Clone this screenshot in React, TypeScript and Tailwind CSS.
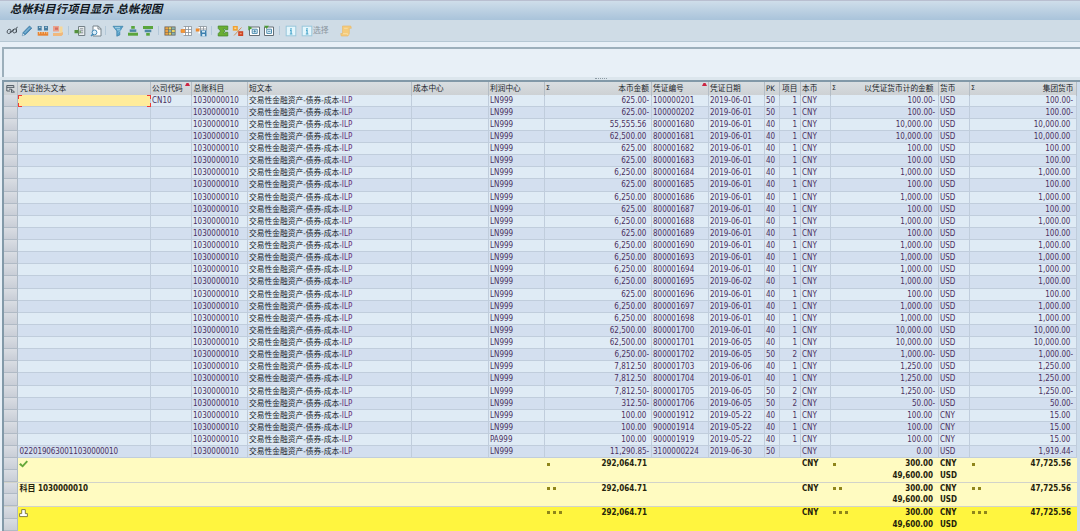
import { ReactNode } from "react";

type Line = {
  text?: string;
  company?: string;
  center: string;
  amount: string;
  doc: string;
  date: string;
  pk: string;
  item: string;
  docAmount: string;
  currency: string;
  groupAmount: string;
};

const line = (
  doc: string,
  amount: string,
  date: string,
  pk: string,
  item: string,
  docAmount: string,
  currency = "USD",
  groupAmount = docAmount,
  center = "LN999",
): Line => ({ doc, amount, date: `2019-${date}`, pk, item, docAmount, currency, groupAmount, center });

const lines: Line[] = [
  { ...line("100000201", "625.00-", "06-01", "50", "1", "100.00-"), company: "CN10" },
  line("100000202", "625.00-", "06-01", "50", "1", "100.00-"),
  line("800001680", "55,555.56", "06-01", "40", "1", "10,000.00"),
  line("800001681", "62,500.00", "06-01", "40", "1", "10,000.00"),
  line("800001682", "625.00", "06-01", "40", "1", "100.00"),
  line("800001683", "625.00", "06-01", "40", "1", "100.00"),
  line("800001684", "6,250.00", "06-01", "40", "1", "1,000.00"),
  line("800001685", "625.00", "06-01", "40", "1", "100.00"),
  line("800001686", "6,250.00", "06-01", "40", "1", "1,000.00"),
  line("800001687", "625.00", "06-01", "40", "1", "100.00"),
  line("800001688", "6,250.00", "06-01", "40", "1", "1,000.00"),
  line("800001689", "625.00", "06-01", "40", "1", "100.00"),
  line("800001690", "6,250.00", "06-01", "40", "1", "1,000.00"),
  line("800001693", "6,250.00", "06-01", "40", "1", "1,000.00"),
  line("800001694", "6,250.00", "06-01", "40", "1", "1,000.00"),
  line("800001695", "6,250.00", "06-02", "40", "1", "1,000.00"),
  line("800001696", "625.00", "06-01", "40", "1", "100.00"),
  line("800001697", "6,250.00", "06-01", "40", "1", "1,000.00"),
  line("800001698", "6,250.00", "06-01", "40", "1", "1,000.00"),
  line("800001700", "62,500.00", "06-01", "40", "1", "10,000.00"),
  line("800001701", "62,500.00", "06-05", "40", "1", "10,000.00"),
  line("800001702", "6,250.00-", "06-05", "50", "2", "1,000.00-"),
  line("800001703", "7,812.50", "06-06", "40", "1", "1,250.00"),
  line("800001704", "7,812.50", "06-01", "40", "1", "1,250.00"),
  line("800001705", "7,812.50-", "06-05", "50", "2", "1,250.00-"),
  line("800001706", "312.50-", "06-05", "50", "2", "50.00-"),
  line("900001912", "100.00", "05-22", "40", "1", "100.00", "CNY", "15.00"),
  line("900001914", "100.00", "05-22", "40", "1", "100.00", "CNY", "15.00"),
  line("900001919", "100.00", "05-22", "40", "1", "100.00", "CNY", "15.00", "PA999"),
  {
    ...line("3100000224", "11,290.85-", "06-30", "50", "", "0.00", "USD", "1,919.44-"),
    text: "0220190630011030000010",
  },
];

const COLUMNS =
  "grid grid-cols-[14px_133px_41px_56px_164px_77px_56px_107px_57px_56px_15px_21px_30px_108px_31px_107px]";

const Icon = ({ children }: { children: ReactNode }) => (
  <svg viewBox="0 0 12 12" className="size-3 shrink-0" fill="none">
    {children}
  </svg>
);

const Separator = () => <span className="h-[9px] w-[3px] shrink-0 border-l border-[#b3c8d8]" />;

const InfoIcon = () => (
  <Icon>
    <rect x="1.2" y="1.2" width="9.6" height="9.6" fill="#e4f6fc" stroke="#9ac8dc" />
    <path d="M6 3v1.4M5 5.4h1.1V9M4.8 9h2.6" stroke="#4aa6ca" strokeWidth="1.2" />
  </Icon>
);

const Toolbar = () => (
  <div className="flex h-[21px] items-center gap-[3.45px] bg-[#cfdce6] pl-1.5">
    <Icon>
      <path
        d="M5 5.2C3.8 3.6 1.2 4.4 1.2 6.8S4 9 5 7V5.2M3.6 7H5c1.3-.4 2.6-1.6 2.3-3M10.4 4.4C9 3.4 6.8 4.2 6.8 6.2S9.4 8.6 10.4 6.4V4.6c-.1-1.6 0-2.4 1.2-2.4M10.4 5.5v2"
        stroke="#39424a"
        strokeWidth=".95"
      />
    </Icon>
    <Icon>
      <path d="m1.3 10.7 1-3.4L8.5 1l2.3 2.2-6.2 6.3z" fill="#4e91bd" stroke="#39749c" strokeWidth=".7" />
      <path d="m1.3 10.7.7-2.2 1.5 1.4z" fill="#e5edf2" />
      <path d="m3.6 8 5.3-5.4" stroke="#a9d3e8" strokeWidth=".8" />
    </Icon>
    <Icon>
      <path d="M.7 1h4v4.5h-4zM7 1h4v4.5H7z" fill="#477da0" />
      <path d="M2 2.3h1.5M8.3 2.3h1.5M4.8 3h2" stroke="#d9eaf2" />
      <path d="M.7 7h10.5v3.7H.7z" fill="#e88432" />
      <path d="M2.5 7v1.7M5 7v1.7M7.5 7v1.7M9.8 7v1.7" stroke="#fff0cb" strokeWidth=".6" />
    </Icon>
    <Icon>
      <path d="M1 1h6v5.5H1z" fill="#e9a28d" />
      <path d="M3 2.5h3v2.3H3z" fill="#d66e61" />
      <path d="M7.5 1.5h3V9h-3z" fill="#f6d798" />
      <path d="M1 8h8l2-1v2.5L9.5 11H1z" fill="#f0b87c" />
    </Icon>
    <Separator />
    <Icon>
      <path d="M4.5 1.5h6.3v9H4.5z" fill="#e9edef" stroke="#748087" />
      <path d="M6 3.8h3.2M6 5.8h3.2M6 7.8h3.2" stroke="#69757c" strokeWidth=".8" />
      <path d="M.5 5h5v3.3h-5zM4.5 3.8v5.8L7 7z" fill="#55923c" />
    </Icon>
    <Icon>
      <path d="M3 1h5.3l2.7 2.8V11H3z" fill="#fff" stroke="#77838b" />
      <path d="M8 1v3h3" stroke="#77838b" />
      <circle cx="4.5" cy="7.4" r="2.4" fill="#ddeffa" stroke="#468cb8" />
      <path d="m1 11 2-2" stroke="#468cb8" strokeWidth="1.4" />
    </Icon>
    <Separator />
    <Icon>
      <path d="M1 1.3h10L7.8 6v4l-3 1.2V6z" fill="#58a1c9" stroke="#3980a8" strokeWidth=".7" />
      <path d="M3 2.7h5M5 4.8h3" stroke="#b8ddeb" strokeWidth=".9" />
      <path d="m5.7 8 4-3.8" stroke="#83bed9" />
    </Icon>
    <Icon>
      <path d="M4.2 1h3.6v2.8H4.2z" fill="#58a53d" />
      <path d="M2.7 4.4h6.6v2.5H2.7z" fill="#4d87a5" />
      <path d="M1 7.7h10v3H1z" fill="#5aa53c" />
    </Icon>
    <Icon>
      <path d="M1 1h10v3H1z" fill="#5aa53c" />
      <path d="M2.7 4.7h6.6v2.5H2.7z" fill="#4d87a5" />
      <path d="M4.2 7.9h3.6v2.8H4.2z" fill="#58a53d" />
    </Icon>
    <Separator />
    <Icon>
      <path d="M.5 1.5h11v9H.5z" fill="#655f50" />
      <path d="M1.3 2.2h2.7v2.2H1.3zM1.3 4.9h2.7v2.2H1.3zM1.3 7.6h2.7v2.2H1.3z" fill="#eda345" />
      <path d="M4.6 2.2h2.6v2.2H4.6zM4.6 7.6h2.6v2.2H4.6zM7.8 4.9h3v2.2h-3z" fill="#ead461" />
      <path d="M4.6 4.9h2.6v2.2H4.6zM7.8 2.2h3v2.2h-3zM7.8 7.6h3v2.2h-3z" fill="#86b3b3" />
    </Icon>
    <Icon>
      <path d="M3.5 1.5h8v9h-8z" fill="#fff" />
      <path
        d="M3.5 1.5h8M3.5 4.5h8M3.5 7.5h8M3.5 10.5h8M5.5 1.5v9M8.5 1.5v9M11.5 1.5v9"
        stroke="#889198"
        strokeWidth=".8"
      />
      <path d="M1 4.5h3.8v3H1z" fill="#f49a31" stroke="#e68435" strokeWidth=".7" />
    </Icon>
    <Icon>
      <path d="M3.5 1.5h8v7h-8z" fill="#fff" />
      <path d="M3.5 1.5h8M3.5 4h8M5.5 1.5v7M8.5 1.5v4M11.5 1.5v4" stroke="#889198" strokeWidth=".8" />
      <path d="M.8 3.5h3.7v3H.8z" fill="#ef8b2d" />
      <path d="M5.5 5.3h6v6h-6z" fill="#3b7fae" />
      <path d="M7 5.8h3v1.7H7zM7.2 9h2.7v2.3H7.2z" fill="#d5e9f4" />
    </Icon>
    <Separator />
    <Icon>
      <path
        d="M1.2 1h9.6v3.7H8.6L8 3.8H6.3L8 6 6.3 8.2H8l.6-.9h2.2V11H1.2V8.6L3.6 6 1.2 3.4z"
        fill="#6aae33"
        stroke="#3f8428"
        strokeWidth=".7"
      />
    </Icon>
    <Icon>
      <path d="M.8 1h5v4.7h-5z" fill="#f1a234" />
      <path d="M2.3 2.4h2v1.6h-2z" fill="#fbdd94" />
      <path d="M6.2 6.2h5V11h-5z" fill="#cc4324" />
      <path d="M7.7 7.8h2v1.5h-2z" fill="#ef9873" />
      <path d="m2 10.5 7.5-8" stroke="#d08a4a" strokeWidth=".9" />
    </Icon>
    <Icon>
      <path d="M1.5 2h10v8.5h-10z" fill="#fff" stroke="#656f76" />
      <path d="M4.2 4.2h5v4.2h-5z" fill="#e5f3fa" stroke="#4e8cae" />
      <path d="M6.7 5v2.6M5.4 6.3H8" stroke="#2f789d" strokeWidth=".8" />
      <path d="M.3.7 4.5 3 .3 5.6z" fill="#4d9a36" />
    </Icon>
    <Icon>
      <path d="M1.5 2h9v8.5h-9z" fill="#fff" stroke="#656f76" />
      <path d="M3.8 4.2h4.7v4.2H3.8z" fill="#e5f3fa" stroke="#4e8cae" />
      <path d="M5 6.3h2.5" stroke="#2f789d" strokeWidth=".8" />
      <path d="M1 .8h5L3.5 4z" fill="#4d9a36" />
    </Icon>
    <Separator />
    <InfoIcon />
    <InfoIcon />
    <span className="-ml-[3px] text-[7.8px] text-[#8b969e]">选择</span>
    <span className="w-[4.6px]" />
    <Icon>
      <path d="M2.5 1h8.3l.5 2.3H9.3v5.4L8 11H1.2L.7 8.5h1.8z" fill="#f4cb7c" stroke="#e8b767" strokeWidth=".6" />
      <path d="M3 8.7h4.5l.5 1.5M4.2 3.3h3.5" stroke="#fae3ae" strokeWidth=".8" />
    </Icon>
  </div>
);

const Handle = () => (
  <div className="border-r border-b border-r-[#adb9c5] border-b-[#b0bac5] bg-linear-to-b from-[#d9dde3] to-[#c9ced7]" />
);

type CellProps = {
  children?: ReactNode;
  className?: string;
};

const Cell = ({ children, className = "pl-px" }: CellProps) => (
  <div className={`overflow-hidden border-r border-b border-[#c0cddc] ${className}`}>{children}</div>
);

// A trailing minus hangs to the right of the digits, so positive values keep that room free.
const Amount = ({ value, wide }: { value: string; wide?: boolean }) => (
  <Cell className={wide ? "pr-[1px] text-right" : "text-right"}>
    <span className={value.endsWith("-") ? "pr-[1.8px]" : "pr-[4.6px]"}>{value}</span>
  </Cell>
);

type HeaderCellProps = {
  children?: string;
  className?: string;
  sum?: boolean;
  sorted?: boolean;
};

const HeaderCell = ({ children, className = "pl-px", sum, sorted }: HeaderCellProps) => (
  <div className={`relative flex justify-between border-r border-[#b4bdc5] whitespace-nowrap ${className}`}>
    {sum && <span className="text-[7px] leading-[12px]">Σ</span>}
    <span>{children}</span>
    {sorted && (
      <svg viewBox="0 0 5 3" className="absolute top-px right-px h-[3px] w-[5px]">
        <path d="M0 3 1.5 0h2L5 3z" fill="#cb2442" />
      </svg>
    )}
  </div>
);

const HeaderRow = () => (
  <div
    className={`${COLUMNS} h-[12.5px] bg-linear-to-b from-[#d9dee1] to-[#cdd1d4] text-[7.7px] leading-[13.5px] text-[#20252a]`}
  >
    <div className="flex items-center justify-center border-r border-[#b4bdc5]">
      <svg viewBox="0 0 9 9" className="size-[9px]" fill="none" stroke="#4a545c" strokeWidth=".9">
        <path d="M.8 7V1.5h7V4M.8 3.4h7M3 5.2h2.5M.8 7H4M5.5 5.2v3M5.5 5.2l3 3H5" />
      </svg>
    </div>
    <HeaderCell className="pl-[2px]">凭证抬头文本</HeaderCell>
    <HeaderCell sorted>公司代码</HeaderCell>
    <HeaderCell className="pl-[1.5px]">总账科目</HeaderCell>
    <HeaderCell>短文本</HeaderCell>
    <HeaderCell>成本中心</HeaderCell>
    <HeaderCell>利润中心</HeaderCell>
    <HeaderCell sum className="pr-[2px] pl-px">
      本币金额
    </HeaderCell>
    <HeaderCell sorted>凭证编号</HeaderCell>
    <HeaderCell>凭证日期</HeaderCell>
    <HeaderCell>PK</HeaderCell>
    <HeaderCell className="justify-end pr-[2.5px]">项目</HeaderCell>
    <HeaderCell>本币</HeaderCell>
    <HeaderCell sum className="pr-[4.5px] pl-px">
      以凭证货币计的金额
    </HeaderCell>
    <HeaderCell>货币</HeaderCell>
    <HeaderCell sum className="pr-[2.5px] pl-px">
      集团货币
    </HeaderCell>
  </div>
);

const SelectedCell = () => (
  <div className="relative border-r border-b border-[#c0cddc] bg-[#ffec9b]">
    <span className="absolute top-0 left-0 size-1 border-t border-l border-[#ee3a36]" />
    <span className="absolute top-0 -right-px size-1 border-t border-r border-[#ee3a36]" />
    <span className="absolute -bottom-px left-0 size-1 border-b border-l border-[#ee3a36]" />
    <span className="absolute -right-px -bottom-px size-1 border-r border-b border-[#ee3a36]" />
  </div>
);

const LineRow = ({ row, index }: { row: Line; index: number }) => (
  <div
    className={`${COLUMNS} h-[12.13px] leading-[11px] text-[#4b3060] ${index % 2 ? "bg-[#d3dfef]" : "bg-[#dfebf5]"}`}
  >
    <Handle />
    {index === 0 ? <SelectedCell /> : <Cell className="pl-[1.5px] tracking-[-0.1px]">{row.text}</Cell>}
    <Cell>{row.company}</Cell>
    <Cell>1030000010</Cell>
    <Cell className="pl-px whitespace-nowrap">
      <span className="text-[7.75px] text-[#20252a]">交易性金融资产-债券-成本-</span>
      <span className="text-[#653078]">ILP</span>
    </Cell>
    <Cell />
    <Cell>{row.center}</Cell>
    <Amount value={row.amount} />
    <Cell>{row.doc}</Cell>
    <Cell>{row.date}</Cell>
    <Cell>{row.pk}</Cell>
    <Cell className="pr-[3px] text-right">{row.item}</Cell>
    <Cell>CNY</Cell>
    <Amount value={row.docAmount} wide />
    <Cell>{row.currency}</Cell>
    <Amount value={row.groupAmount} wide />
  </div>
);

const Dots = ({ count }: { count: number }) => (
  <span className="flex gap-[3px] pt-[4.5px] pl-[2px]">
    {Array.from({ length: count }, (_, i) => (
      <i key={i} className="size-[3px] bg-[#8f851a]" />
    ))}
  </span>
);

const TotalRow = ({ level, className, children }: { level: number; className: string; children: ReactNode }) => (
  <div className={`${COLUMNS} h-[24.26px] grid-rows-2 leading-[11px] font-bold text-[#24220c] ${className}`}>
    <Handle />
    <div className="col-span-6 pl-[1.5px]">{children}</div>
    <div className="flex justify-between pr-[5px]">
      <Dots count={level} />
      292,064.71
    </div>
    <div className="col-span-4" />
    <div className="pl-px">CNY</div>
    <div className="flex justify-between pr-[6px]">
      <Dots count={level} />
      300.00
    </div>
    <div className="pl-px">CNY</div>
    <div className="flex justify-between pr-[6px]">
      <Dots count={level} />
      47,725.56
    </div>
    <Handle />
    <div className="col-span-12" />
    <div className="pr-[6px] text-right leading-[12px]">49,600.00</div>
    <div className="pl-px leading-[12px]">USD</div>
    <div />
  </div>
);

const App = () => {
  return (
    <div className="flex h-[531px] w-[1080px] flex-col overflow-hidden bg-[#e8f0f7] font-['DejaVu_Sans_Condensed','DejaVu_Sans','Noto_Sans_CJK_SC',sans-serif] text-[8px] [font-stretch:condensed]">
      <header className="h-5 shrink-0 border-t border-[#b9bfd0] bg-linear-to-b from-[#cfdeea] to-[#a9c3da] pl-2.5 text-[11.3px] leading-[18.5px] font-bold tracking-[0.14px] text-[#10161c] italic">
        总帐科目行项目显示 总帐视图
      </header>
      <Toolbar />
      <div className="h-[6px] shrink-0 border-t border-[#b5c7d3]" />
      <div className="ml-[2px] h-[30px] shrink-0 border-t-2 border-l-2 border-[#9cafbb]" />
      <div className="flex h-[3px] shrink-0 items-center justify-center bg-[#dce6ed] pl-[122px]">
        <span className="h-px w-3 border-t border-dotted border-[#8d9ba5]" />
      </div>
      <div className="ml-[2px] flex min-h-0 flex-1 flex-col overflow-hidden border-t-2 border-l-2 border-[#8299a8] bg-[#cddceb]">
        <div className="w-[1073px]">
          <HeaderRow />
          {lines.map((row, index) => (
            <LineRow key={row.doc} row={row} index={index} />
          ))}
          <TotalRow level={1} className="border-b border-[#d2d3ca] bg-[#fffbc1]">
            <svg viewBox="0 0 9 8" className="mt-[2px] -ml-px h-2 w-[9px]">
              <path d="m0 4.5 1.8-1.4L3.5 5 7.6.5 9 1.7 3.7 7.6z" fill="#65a83b" />
            </svg>
          </TotalRow>
          <TotalRow level={2} className="border-b border-[#d2d3ca] bg-[#fffbc1]">
            科目 1030000010
          </TotalRow>
          <TotalRow level={3} className="bg-[#fff53f]">
            <svg
              viewBox="0 0 9 9"
              className="mt-[2px] -ml-px h-[9px] w-[9px]"
              fill="#fff"
              stroke="#77723b"
              strokeWidth=".9"
            >
              <path d="M2.7.6h3.6V4.6H8.4V7.6H.6V4.6h2.1z" />
            </svg>
          </TotalRow>
        </div>
      </div>
    </div>
  );
};

export default App;
